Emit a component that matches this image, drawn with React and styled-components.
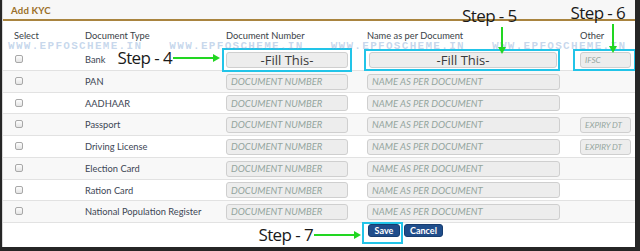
import styled, { createGlobalStyle } from 'styled-components';

const GlobalStyle = createGlobalStyle`
	html, body {
		margin: 0;
		padding: 0;
		background: #262626;
		width: 640px;
		height: 251px;
		overflow: hidden;
	}
	#root {
		width: 640px;
		height: 251px;
	}
`;

const docs = [
	{ type: 'Bank', fill: true, other: 'IFSC', h: 25 },
	{ type: 'PAN', stripe: true, h: 22 },
	{ type: 'AADHAAR', h: 21 },
	{ type: 'Passport', stripe: true, other: 'EXPIRY DT', h: 22 },
	{ type: 'Driving License', other: 'EXPIRY DT', h: 22 },
	{ type: 'Election Card', stripe: true, h: 22 },
	{ type: 'Ration Card', h: 21 },
	{ type: 'National Population Register', stripe: true, h: 22 },
];

const GreenArrow = ({ dir = 'right', len }) => {
	if (dir === 'down') {
		return (
			<svg width="8" height={len} viewBox={`0 0 8 ${len}`}>
				<line x1="4" y1="0" x2="4" y2={len - 5} stroke="#22d622" strokeWidth="2" />
				<polygon points={`0,${len - 7} 8,${len - 7} 4,${len}`} fill="#22d622" />
			</svg>
		);
	}
	return (
		<svg width={len} height="8" viewBox={`0 0 ${len} 8`}>
			<line x1="0" y1="4" x2={len - 5} y2="4" stroke="#22d622" strokeWidth="2" />
			<polygon points={`${len - 7},0 ${len - 7},8 ${len},4`} fill="#22d622" />
		</svg>
	);
};

// Step label with its arrow, laid out side by side (right) or stacked (down)
const Step = ({ n, dir = 'right', len, ...rest }) => (
	<StepMark $dir={dir} {...rest}>
		<StepLabel>Step - {n}</StepLabel>
		<GreenArrow dir={dir} len={len} />
	</StepMark>
);

// cyan highlight box drawn around a control without moving it
const Marked = ({ pad, children }) => (pad ? <Mark $pad={pad}>{children}</Mark> : children);

export default function App() {
	return (
		<>
			<GlobalStyle />
			<Panel>
				<Heading>Add KYC</Heading>
				<HeadRow>
					<span>Select</span>
					<span>Document Type</span>
					<span>Document Number</span>
					<span>Name as per Document</span>
					<span>Other</span>
				</HeadRow>
				{docs.map((d) => (
					<Row key={d.type} h={d.h} stripe={d.stripe}>
						<Check />
						<DocType>
							{d.type}
							{d.fill && <Step n={4} len={47} />}
						</DocType>
						<div>
							<Marked pad={d.fill && [2, 2, 2, 2]}>
								<Field w={122} fill={d.fill}>
									{d.fill ? '-Fill This-' : 'DOCUMENT NUMBER'}
								</Field>
							</Marked>
						</div>
						<div>
							<Marked pad={d.fill && [1, 1, 1, 1]}>
								<Field w={d.fill ? 188 : 193} fill={d.fill} shift={d.fill ? 2 : 0}>
									{d.fill ? '-Fill This-' : 'NAME AS PER DOCUMENT'}
								</Field>
							</Marked>
						</div>
						<div>
							{d.other && (
								<Marked pad={d.fill && [1, 3, 1, 5]}>
									<Field w={51} small>
										{d.other}
									</Field>
								</Marked>
							)}
						</div>
					</Row>
				))}
				<Footer>
					<span />
					<span />
					<StepCell>
						<Step n={7} len={47} />
					</StepCell>
					<Buttons>
						<Marked pad={[0, 1, 5, 4]}>
							<Btn>Save</Btn>
						</Marked>
						<Btn>Cancel</Btn>
					</Buttons>
				</Footer>

				<Watermark>
					{[0, 1, 2, 3].map((i) => (
						<span key={i}>WWW.EPFOSCHEME.IN</span>
					))}
				</Watermark>
				<TopSteps>
					<Step n={5} dir="down" len={27} $gap={-1} $arrowRight={11} />
					<Step n={6} dir="down" len={29} $gap={-3} $arrowRight={8} />
				</TopSteps>
			</Panel>
		</>
	);
}

const Panel = styled.div`
	position: relative;
	box-sizing: border-box;
	width: 633px;
	height: 247px;
	margin-left: 2px;
	background: #fff;
	border-left: 1px solid #d8d8d8;
	font-family: Lato, 'Open Sans', sans-serif;
	color: #3c4654;
	overflow: hidden;
`;

const Heading = styled.div`
	height: 21px;
	box-sizing: border-box;
	padding: 5px 0 0 8px;
	background: #f7f7f7;
	border-bottom: 2px solid #a9843f;
	color: #9a6f28;
	font-size: 9.6px;
	font-weight: 700;
	letter-spacing: 0.2px;
`;

const grid = `
	display: grid;
	grid-template-columns: 71px 141px 141px 213px 1fr;
	padding-left: 11px;
	box-sizing: border-box;
`;

const HeadRow = styled.div`
	${grid}
	height: 25px;
	padding-top: 9px;
	font-size: 9.3px;
	color: #3a3f48;
`;

const Row = styled.div`
	${grid}
	height: ${(p) => p.h}px;
	align-items: center;
	background: ${(p) => (p.stripe ? '#f8f8f8' : '#fff')};
	border-bottom: 1px solid #e2e2e2;
`;

const Check = styled.span`
	width: 8px;
	height: 8px;
	margin: -1px 0 0 1px;
	border: 1px solid #a8a8a8;
	border-radius: 2px;
	background: linear-gradient(#fdfdfd, #e4e4e4);
	box-sizing: border-box;
`;

const DocType = styled.div`
	display: flex;
	align-items: center;
	justify-content: space-between;
	padding-right: 6px;
	font-size: 9.3px;
`;

const Mark = styled.div`
	display: flex;
	width: fit-content;
	border: 2px solid #22c4e8;
	padding: ${(p) => p.$pad.map((v) => `${v}px`).join(' ')};
	margin: ${(p) => p.$pad.map((v) => `${-v - 2}px`).join(' ')};
`;

const Field = styled.div`
	box-sizing: border-box;
	width: ${(p) => p.w}px;
	height: 16px;
	margin-left: ${(p) => p.shift || 0}px;
	border: 1px solid #cfcfcf;
	border-radius: 3px;
	background: #ededed;
	display: flex;
	align-items: center;
	padding-left: 4px;
	white-space: nowrap;
	overflow: hidden;
	${(p) =>
		p.fill
			? `
		justify-content: center;
		padding-left: 0;
		font-family: 'Open Sans', sans-serif;
		font-size: 13px;
		color: #3a3a3a;
	`
			: `
		font-style: italic;
		font-size: ${p.small ? 8.2 : 9.5}px;
		color: #94a59e;
	`}
`;

const Footer = styled.div`
	${grid}
	height: 22px;
`;

const StepCell = styled.div`
	display: flex;
	justify-content: flex-end;
	padding-right: 6px;
`;

const Buttons = styled.div`
	display: flex;
	gap: 4px;
	padding: 1px 0 0 1px;
	align-items: flex-start;
`;

const Btn = styled.button`
	height: 13px;
	padding: 0 5px;
	border: 1px solid #173d70;
	border-radius: 3px;
	background: #1f4d8b;
	color: #fff;
	font-family: Lato, sans-serif;
	font-size: 9px;
	font-weight: 700;
	line-height: 11px;
	min-width: 32px;
`;

const StepMark = styled.div`
	display: flex;
	flex-direction: ${(p) => (p.$dir === 'down' ? 'column' : 'row')};
	align-items: ${(p) => (p.$dir === 'down' ? 'flex-end' : 'center')};
	gap: ${(p) => (p.$gap != null ? p.$gap : 1)}px;
	margin-bottom: ${(p) => (p.$dir === 'down' ? 0 : 4)}px;
	svg {
		margin-right: ${(p) => p.$arrowRight || 0}px;
	}
`;

const StepLabel = styled.span`
	font-family: 'Open Sans', sans-serif;
	font-size: 17px;
	letter-spacing: -0.6px;
	color: #1a1a1a;
	white-space: nowrap;
	line-height: 23px;
`;

const Watermark = styled.div`
	position: absolute;
	top: 40px;
	left: 5px;
	display: flex;
	gap: 27px;
	font-family: 'Liberation Mono', monospace;
	font-size: 11px;
	font-weight: 700;
	letter-spacing: 1.3px;
	color: rgba(120, 160, 210, 0.42);
	pointer-events: none;
`;

const TopSteps = styled.div`
	position: absolute;
	top: 1px;
	left: 459px;
	display: flex;
	gap: 54px;
	align-items: flex-start;
	& > div:first-child {
		margin-top: 3px;
	}
`;
